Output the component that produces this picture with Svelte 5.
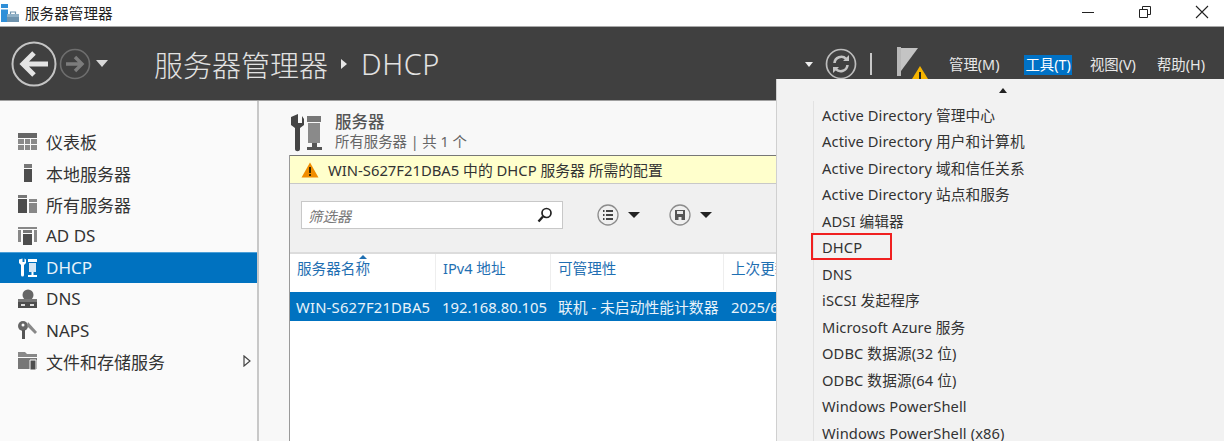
<script>
let nav_items = [
  { key: "dash", label: "仪表板" },
  { key: "local", label: "本地服务器" },
  { key: "all", label: "所有服务器" },
  { key: "adds", label: "AD DS" },
  { key: "dhcp", label: "DHCP", active: true },
  { key: "dns", label: "DNS" },
  { key: "naps", label: "NAPS" },
  { key: "files", label: "文件和存储服务", more: true }
]

let columns = [
  { label: "服务器名称", width: 146, sorted: true },
  { label: "IPv4 地址", width: 115 },
  { label: "可管理性", width: 173 },
  { label: "上次更新", width: 120 }
]

let cells = [
  { text: "WIN-S627F21DBA5", width: 146 },
  { text: "192.168.80.105", width: 116 },
  { text: "联机 - 未启动性能计数器", width: 173 },
  { text: "2025/6/", width: 100 }
]

let tools = [
  "Active Directory 管理中心",
  "Active Directory 用户和计算机",
  "Active Directory 域和信任关系",
  "Active Directory 站点和服务",
  "ADSI 编辑器",
  "DHCP",
  "DNS",
  "iSCSI 发起程序",
  "Microsoft Azure 服务",
  "ODBC 数据源(32 位)",
  "ODBC 数据源(64 位)",
  "Windows PowerShell",
  "Windows PowerShell (x86)"
]
</script>

<div class="window">
  <div class="titlebar">
    <svg class="app-icon" width="25" height="24" viewBox="0 0 25 24">
      <rect x="1" y="3" width="7" height="18" fill="#2f8fd8" />
      <rect x="1" y="7" width="7" height="1.500" fill="#fff" />
      <rect x="7" y="13" width="12" height="8" fill="#6f93ad" />
      <path d="M7 13h12v3H7z" fill="#8fb0c6" />
      <path d="M10.500 13v-2h5v2" fill="none" stroke="#6f93ad" stroke-width="1.200" />
    </svg>
    <span class="app-title">服务器管理器</span>
    <div class="win-controls">
      <svg width="14" height="14" viewBox="0 0 14 14"><path d="M1 7.500h12" stroke="#222" stroke-width="1" /></svg>
      <svg width="14" height="14" viewBox="0 0 14 14" fill="none" stroke="#222"><path d="M1.500 4.500h8v8h-8zM4.500 4.500v-3h8v8h-3" /></svg>
      <svg width="14" height="14" viewBox="0 0 14 14"><path d="M1 1l12 12M13 1L1 13" stroke="#222" stroke-width="1.100" /></svg>
    </div>
  </div>

  <div class="header">
    <svg class="nav-back" width="46" height="46" viewBox="0 0 46 46" fill="none">
      <circle cx="23" cy="23" r="21.500" stroke="#c4c4c4" stroke-width="2" />
      <path d="M37 23H12M23 12L12 23l11 11" stroke="#e4e4e4" stroke-width="5" />
    </svg>
    <svg class="nav-fwd" width="32" height="32" viewBox="0 0 32 32" fill="none">
      <circle cx="16" cy="16" r="14.500" stroke="#6e6e6e" stroke-width="1.600" />
      <path d="M7 16h16M16 9l7 7-7 7" stroke="#7c7c7c" stroke-width="3.400" />
    </svg>
    <span class="caret light nav-caret"></span>
    <div class="crumb">服务器管理器<span class="crumb-sep"></span><span class="crumb-leaf">DHCP</span></div>

    <div class="tools">
      <span class="caret light small"></span>
      <svg class="refresh" width="32" height="32" viewBox="0 0 32 32" fill="none">
        <circle cx="16" cy="16" r="14.500" stroke="#bdbdbd" stroke-width="1.700" />
        <path d="M9.500 15a6.800 6.800 0 0 1 11.600-4.200M22.500 17a6.800 6.800 0 0 1-11.600 4.200" stroke="#c4c4c4" stroke-width="2.600" />
        <path d="M18 13h6V7zM14 19H8v6z" fill="#c4c4c4" />
      </svg>
      <span class="tool-sep"></span>
      <div class="flag">
        <svg width="32" height="33" viewBox="0 0 32 33">
          <path d="M0 1h4v29H0z" fill="#b8b8b8" />
          <path d="M4 2h17L4 25z" fill="#c4c4c4" />
          <path d="M23 20l8 13H15z" fill="#f5b400" />
          <path d="M22 26h2v7h-2z" fill="#222" />
        </svg>
      </div>
      <div class="menu-links">
        <span class="menu-link">管理(M)</span>
        <span class="menu-link on">工具(T)</span>
        <span class="menu-link">视图(V)</span>
        <span class="menu-link">帮助(H)</span>
      </div>
    </div>
  </div>

  <div class="main">
    <div class="sidebar">
      {#each nav_items as item}
        <div class="nav-row" class:active={item.active}>
          <svg class="nav-icon" width="22" height="20" viewBox="0 0 22 20">
            {#if item.key === "dash"}
              <path d="M1 1h19v5H1z" fill="#666" />
              <path d="M1 7h6v5H1zM8 7h5v5H8zM14 7h6v5h-6zM1 13h6v5H1zM8 13h5v5H8zM14 13h6v5h-6z" fill="#8a8a8a" />
            {:else if item.key === "local"}
              <path d="M7 1h8v4H7z" fill="#777" /><path d="M7 6h8v13H7z" fill="#4d4d4d" />
            {:else if item.key === "all"}
              <path d="M1 1h9v3H1z" fill="#777" /><path d="M1 5h9v14H1z" fill="#4d4d4d" />
              <path d="M12 5h8v3h-8z" fill="#888" /><path d="M12 9h8v10h-8z" fill="#888" />
            {:else if item.key === "adds"}
              <path d="M1 1h19v2H1zM1 4h3v12H1zM17 4h3v12h-3z" fill="#888" />
              <path d="M6 4h9v3H6z" fill="#777" /><path d="M6 8h9v11H6z" fill="#4d4d4d" />
            {:else if item.key === "dhcp"}
              <path d="M2 1.500v3.500l2 2v10a1.500 1.500 0 0 0 3 0V7l2-2V1.500L7.500 0.500V4h-2V0.500z" fill="#fff" />
              <path d="M11 1h9v3h-9z" fill="#fff" /><path d="M12 5h7v9h-7z" fill="#d5e6f4" /><path d="M14.500 14h2v3h-2zM11 17h9v2h-9z" fill="#fff" />
            {:else if item.key === "dns"}
              <circle cx="11" cy="6" r="5.500" fill="#666" /><path d="M1 10h19v3H1z" fill="#777" /><path d="M1 13h19v6H1z" fill="#4d4d4d" />
              <path d="M4 15h4v2H4zM13 15h4v2h-4z" fill="#ddd" />
            {:else if item.key === "naps"}
              <circle cx="6" cy="6" r="5" fill="#666" /><circle cx="6" cy="5" r="1.500" fill="#fafafa" /><path d="M5 10h3v9H5z" fill="#555" />
              <path d="M11 2l9 10-2 2-8-8z" fill="#888" />
            {:else}
              <path d="M1 1h7l2 2h10v3H1z" fill="#888" /><path d="M1 7h19v11H1z" fill="#777" /><path d="M13 9h6v10h-6z" fill="#4d4d4d" stroke="#fafafa" />
            {/if}
          </svg>
          <span class="nav-label">{item.label}</span>
          {#if item.more}
            <svg class="nav-more" width="8" height="12" viewBox="0 0 8 12"><path d="M1 1l6 5-6 5z" fill="none" stroke="#444" stroke-width="1.200" /></svg>
          {/if}
        </div>
      {/each}
    </div>

    <div class="content">
      <div class="group-head">
        <svg width="34" height="40" viewBox="0 0 34 40">
          <path d="M2 6v6l4 3v21c0 3 5 3 5 0V15l4-3V6l-2-3v7H9V1L2 4z" fill="#444" />
          <path d="M18 3h14v6H18z" fill="#777" /><path d="M19 10h12v20H19z" fill="#8a8a8a" />
          <path d="M23 30h5v4h-5zM18 34h15v3H18z" fill="#555" />
        </svg>
        <div class="group-text">
          <div class="group-title">服务器</div>
          <div class="group-sub">所有服务器 | 共 1 个</div>
        </div>
      </div>

      <div class="panel">
        <div class="banner">
          <svg width="18" height="16" viewBox="0 0 18 16">
            <path d="M9 0.500L17.500 15.500H0.500z" fill="#f08c00" />
            <path d="M8 5h2v6H8zM8 12h2v2H8z" fill="#3a2a00" />
          </svg>
          <span>WIN-S627F21DBA5 中的 DHCP 服务器 所需的配置</span>
        </div>

        <div class="filter-bar">
          <div class="filter-box">
            <span class="filter-hint">筛选器</span>
            <svg width="16" height="16" viewBox="0 0 16 16" fill="none" stroke="#222">
              <circle cx="9.500" cy="6" r="4.500" stroke-width="1.700" />
              <path d="M6 9.500l-4.500 5" stroke-width="2.400" />
            </svg>
          </div>
          <div class="round-btn">
            <svg width="22" height="22" viewBox="0 0 22 22" fill="none">
              <circle cx="11" cy="11" r="10" stroke="#8c8c8c" stroke-width="1.300" />
              <path d="M9 7h7M9 11h7M9 15h7M6 7h1.500M6 11h1.500M6 15h1.500" stroke="#444" stroke-width="2" />
            </svg>
            <span class="caret dark"></span>
          </div>
          <div class="round-btn">
            <svg width="22" height="22" viewBox="0 0 22 22" fill="none">
              <circle cx="11" cy="11" r="10" stroke="#8c8c8c" stroke-width="1.300" />
              <path d="M6 6h10v10H6z" fill="#555" /><path d="M8 7h6v3H8z" fill="#e8e8e8" /><path d="M9.500 13h3v3h-3z" fill="#e8e8e8" />
            </svg>
            <span class="caret dark"></span>
          </div>
        </div>

        <div class="table-head">
          {#each columns as col}
            <div class="th" style="width:{col.width}px">
              {#if col.sorted}<span class="sort-mark"></span>{/if}
              {col.label}
            </div>
          {/each}
        </div>
        <div class="table-row">
          {#each cells as cell}
            <div class="td" style="width:{cell.width}px">{cell.text}</div>
          {/each}
        </div>
      </div>
    </div>
  </div>

  <div class="tools-menu">
    <div class="menu-notch"><span class="caret up"></span></div>
    <div class="menu-list">
      {#each tools as tool}
        <div class="menu-item" class:marked={tool === "DHCP"}><span>{tool}</span></div>
      {/each}
    </div>
  </div>
</div>

<style>
  :global(body) {
    margin: 0;
    background: #fff;
  }

  .window {
    position: relative;
    width: 1224px;
    height: 441px;
    overflow: hidden;
    font-family: "Noto Sans", "Noto Sans CJK SC", sans-serif;
    font-size: 14px;
    color: #333;
  }

  .titlebar {
    height: 26px;
    display: flex;
    align-items: center;
    background: #fff;
    border-bottom: 1px solid #a8a8a8;
    box-sizing: content-box;
  }

  .app-title {
    font-size: 14.600px;
    color: #222;
    margin-top: -1px;
  }

  .win-controls {
    margin-left: auto;
    display: flex;
    gap: 43px;
    padding-right: 15px;
    margin-top: -3px;
  }

  .header {
    height: 73px;
    background: #404040;
    border-bottom: 1px solid #a0a0a0;
    display: flex;
    align-items: center;
    padding-left: 11px;
  }

  .nav-fwd {
    margin-left: 2px;
  }

  .caret {
    display: inline-block;
    width: 0;
    height: 0;
    border-left: 6px solid transparent;
    border-right: 6px solid transparent;
  }

  .caret.light {
    border-top: 7px solid #d8d8d8;
  }

  .caret.light.small {
    border-left-width: 4px;
    border-right-width: 4px;
    border-top-width: 5px;
    border-top-color: #eee;
  }

  .caret.dark {
    border-top: 6px solid #222;
  }

  .caret.up {
    border-left-width: 4px;
    border-right-width: 4px;
    border-bottom: 5px solid #222;
  }

  .nav-caret {
    margin-left: 5px;
  }

  .crumb {
    margin-left: 46px;
    font-size: 29px;
    font-weight: 300;
    color: #e2e2e2;
    display: flex;
    align-items: center;
  }

  .crumb-leaf {
    letter-spacing: 0.500px;
  }

  .crumb-sep {
    width: 0;
    height: 0;
    margin: 0 14px 0 13px;
    border-top: 5px solid transparent;
    border-bottom: 5px solid transparent;
    border-left: 6px solid #e6e6e6;
  }

  .tools {
    position: absolute;
    left: 805px;
    top: 46px;
    height: 36px;
    display: flex;
    align-items: center;
  }

  .refresh {
    margin-left: 12px;
  }

  .tool-sep {
    width: 2px;
    height: 22px;
    background: #c8c8c8;
    margin: 0 25px 0 13px;
  }

  .flag {
    height: 33px;
    margin-top: -3px;
    width: 31px;
    overflow: hidden;
    margin-right: 20px;
    flex: none;
  }

  .menu-links {
    display: flex;
    flex: none;
    margin-top: 2px;
  }

  .menu-link {
    font-size: 14.400px;
    color: #e8e8e8;
    padding: 0 1px;
    line-height: 20px;
    white-space: nowrap;
  }

  .menu-link:nth-child(1) {
    margin-right: 24px;
  }

  .menu-link:nth-child(2) {
    margin-right: 17px;
    background: #0072c6;
    color: #fff;
  }

  .menu-link:nth-child(3) {
    margin-right: 19px;
  }

  .main {
    height: 340px;
    display: flex;
  }

  .sidebar {
    width: 257px;
    flex: none;
    background: #fafafa;
    border-right: 2px solid #c8c8c8;
    padding-top: 25px;
    box-sizing: content-box;
  }

  .nav-row {
    height: 31.400px;
    display: flex;
    align-items: center;
    padding-left: 17px;
    color: #333;
    font-size: 17px;
    box-sizing: border-box;
  }

  .nav-row.active {
    background: #0072c0;
    color: #e8f2fa;
    border-top: 1px solid #4a9fd8;
  }

  .nav-icon {
    flex: none;
  }

  .nav-label {
    margin-left: 7px;
  }

  .nav-more {
    margin-left: auto;
    margin-right: 6px;
  }

  .content {
    flex: 1;
    background: #f8f8f8;
    padding-left: 30px;
    min-width: 0;
  }

  .group-head {
    height: 54px;
    display: flex;
    padding-top: 12px;
    box-sizing: border-box;
  }

  .group-text {
    margin-left: 12px;
    margin-top: -1px;
  }

  .group-title {
    font-size: 16.500px;
    font-weight: 500;
    color: #555;
    line-height: 20px;
  }

  .group-sub {
    font-size: 14.400px;
    color: #666;
    line-height: 20px;
  }

  .panel {
    border-left: 1px solid #9a9a9a;
    height: 286px;
    background: #fff;
  }

  .banner {
    height: 29px;
    display: flex;
    align-items: center;
    gap: 9px;
    padding-left: 11px;
    background: #ffffcc;
    border-top: 1px solid #777;
    border-bottom: 1px solid #c8c8c8;
    font-size: 14.800px;
    color: #333;
    box-sizing: border-box;
  }

  .filter-bar {
    height: 70px;
    background: #f0f0f0;
    border-bottom: 2px solid #dcdcdc;
    display: flex;
    align-items: center;
    padding-left: 11px;
    box-sizing: border-box;
    padding-bottom: 6px;
  }

  .filter-box {
    width: 262px;
    height: 28px;
    background: #fff;
    border: 1px solid #c8c8c8;
    display: flex;
    align-items: center;
    justify-content: space-between;
    padding: 0 9px 0 6px;
    box-sizing: border-box;
    margin-right: 34px;
  }

  .filter-hint {
    font-style: italic;
    font-size: 14.400px;
    color: #777;
  }

  .round-btn {
    display: flex;
    align-items: center;
    gap: 9px;
    margin-right: 29px;
  }

  .table-head {
    height: 38px;
    display: flex;
    background: #fff;
  }

  .th {
    position: relative;
    box-sizing: border-box;
    padding: 3px 0 0 7px;
    height: 36px;
    color: #1f6fb2;
    font-size: 14.600px;
    border-right: 1px solid #eee;
    white-space: nowrap;
    overflow: hidden;
    flex: none;
  }

  .sort-mark {
    position: absolute;
    left: 69px;
    top: 1px;
    width: 0;
    height: 0;
    border-left: 4px solid transparent;
    border-right: 4px solid transparent;
    border-bottom: 4px solid #1f6fb2;
  }

  .table-row {
    height: 29px;
    display: flex;
    align-items: center;
    background: #0072c0;
    color: #e8f2fa;
    font-size: 14.800px;
    padding-left: 6px;
  }

  .td {
    flex: none;
    white-space: nowrap;
  }

  .td:first-child {
    letter-spacing: 0.200px;
  }

  .tools-menu {
    position: absolute;
    left: 776px;
    top: 79px;
    width: 448px;
    height: 362px;
    background: #f2f2f2;
    border-left: 1px solid #d0d0d0;
    box-sizing: border-box;
  }

  .menu-notch {
    height: 22.400px;
    display: flex;
    justify-content: center;
    padding-left: 5px;
    padding-top: 9px;
    box-sizing: border-box;
  }

  .menu-list {
    margin-left: 36px;
    border-left: 1px solid #e2e2e2;
    height: 340px;
  }

  .menu-item {
    height: 26.500px;
    display: flex;
    align-items: center;
    padding-left: 8px;
    font-size: 14.700px;
    letter-spacing: 0.100px;
    line-height: 16px;
    color: #333;
    white-space: nowrap;
  }

  .menu-item.marked {
    position: relative;
  }

  .menu-item.marked::after {
    content: "";
    position: absolute;
    left: -3px;
    top: -1px;
    width: 81px;
    height: 27px;
    border: 2px solid #f02020;
    box-sizing: border-box;
  }
</style>
